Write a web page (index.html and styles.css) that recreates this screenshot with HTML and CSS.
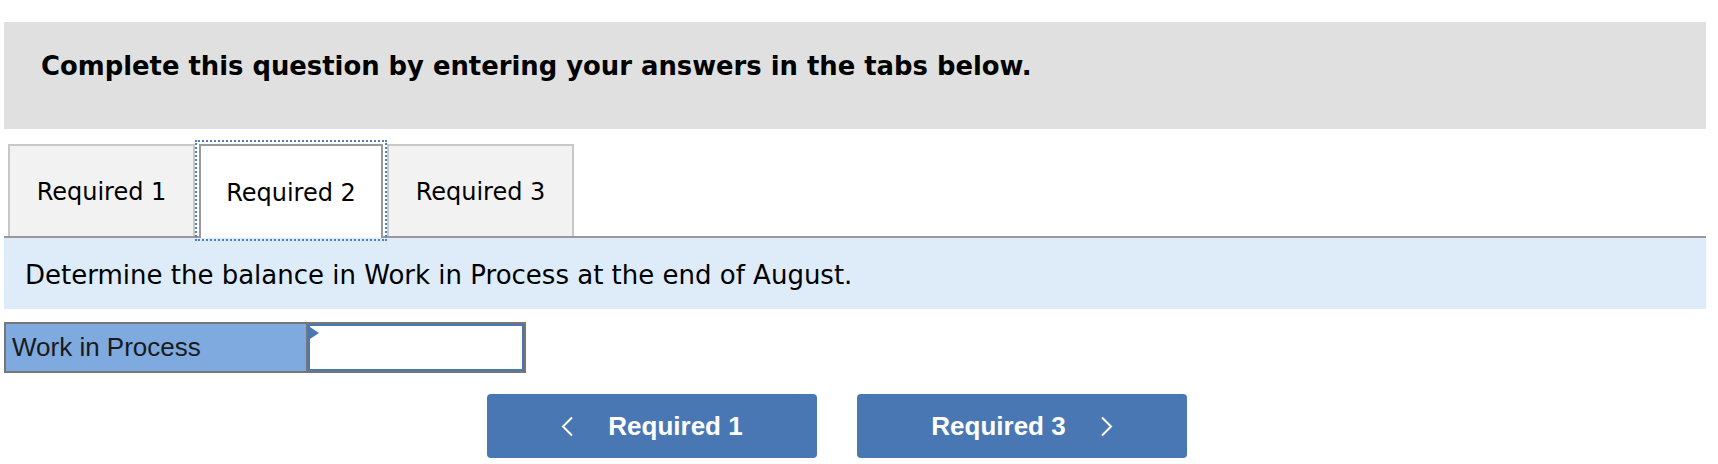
FILE: index.html
```html
<!DOCTYPE html>
<html lang="en">
<head>
<meta charset="utf-8">
<title>Required 2</title>
<link rel="stylesheet" href="styles.css">
</head>
<body>
<div class="page">
  <div class="instructions">Complete this question by entering your answers in the tabs below.</div>
  <div class="tabs">
    <div class="tab">Required 1</div>
    <div class="tab tab-active">Required 2</div>
    <div class="tab">Required 3</div>
  </div>
  <div class="prompt">Determine the balance in Work in Process at the end of August.</div>
  <div class="answer-row">
    <div class="answer-label">Work in Process</div>
    <div class="answer-input"></div>
  </div>
  <div class="nav">
    <div class="nav-btn">
      <svg class="chev" width="13" height="21" viewBox="0 0 13 21"><polyline points="11,1.5 2,10.5 11,19.5" fill="none" stroke="#fff" stroke-width="2"/></svg>
      <span>Required 1</span>
    </div>
    <div class="nav-btn">
      <span>Required 3</span>
      <svg class="chev" width="13" height="21" viewBox="0 0 13 21"><polyline points="2,1.5 11,10.5 2,19.5" fill="none" stroke="#fff" stroke-width="2"/></svg>
    </div>
  </div>
</div>
</body>
</html>
```
FILE: styles.css
```css
html, body {
  margin: 0;
  padding: 0;
  background: #ffffff;
}
.page {
  padding-top: 22px;
  padding-left: 4px;
  width: 1702px;
  font-family: "DejaVu Sans", Verdana, sans-serif;
  color: #000;
}
.instructions {
  box-sizing: border-box;
  height: 107px;
  background: #e0e0e0;
  padding: 29px 0 0 37px;
  font-weight: bold;
  font-size: 25.85px;
  line-height: 30px;
}
.tabs {
  margin-top: 15px;
  display: flex;
  align-items: flex-start;
  padding-left: 4px;
  height: 92px;
  border-bottom: 2px solid #999999;
}
.tab {
  box-sizing: border-box;
  width: 187px;
  height: 92px;
  background: #f2f2f2;
  border: 2px solid #c8c8c8;
  border-bottom: none;
  display: flex;
  align-items: center;
  justify-content: center;
  font-size: 24px;
  padding-top: 2px;
}
.tab-active {
  position: relative;
  width: 184px;
  height: 94px;
  margin: 0 4px;
  background: #ffffff;
  border-color: #999999;
}
.tab-active::after {
  content: "";
  position: absolute;
  left: -6px;
  right: -6px;
  top: -6px;
  bottom: -3px;
  border: 2px dotted #4a7fc6;
}
.prompt {
  box-sizing: border-box;
  height: 71px;
  background: #deebf8;
  padding: 22px 0 0 21px;
  font-size: 26px;
  line-height: 30px;
}
.answer-row {
  margin-top: 13px;
  display: flex;
  width: 522px;
  height: 51px;
  box-sizing: border-box;
  border: 2px solid #767676;
  font-family: "Liberation Sans", Arial, sans-serif;
}
.answer-label {
  box-sizing: border-box;
  width: 302px;
  background: #7eaadf;
  border-right: 2px solid #767676;
  display: flex;
  align-items: center;
  padding-left: 6px;
  font-size: 26px;
  color: #1a1a1a;
}
.answer-input {
  position: relative;
  flex: 1;
  background: #fff;
  border: 2px solid #4a76b2;
}
.answer-input::before {
  content: "";
  position: absolute;
  left: 0;
  top: 1px;
  border-left: 9px solid #4a76b2;
  border-top: 6px solid transparent;
  border-bottom: 6px solid transparent;
}
.nav {
  margin-top: 21px;
  display: flex;
  justify-content: center;
  gap: 40px;
  padding-right: 36px;
}
.nav-btn {
  width: 330px;
  height: 64px;
  background: #4977b4;
  border-radius: 4px;
  display: flex;
  align-items: center;
  justify-content: center;
  gap: 34px;
  color: #fff;
  font-family: "Liberation Sans", Arial, sans-serif;
  font-weight: bold;
  font-size: 26px;
}
.chev {
  display: block;
}
```
